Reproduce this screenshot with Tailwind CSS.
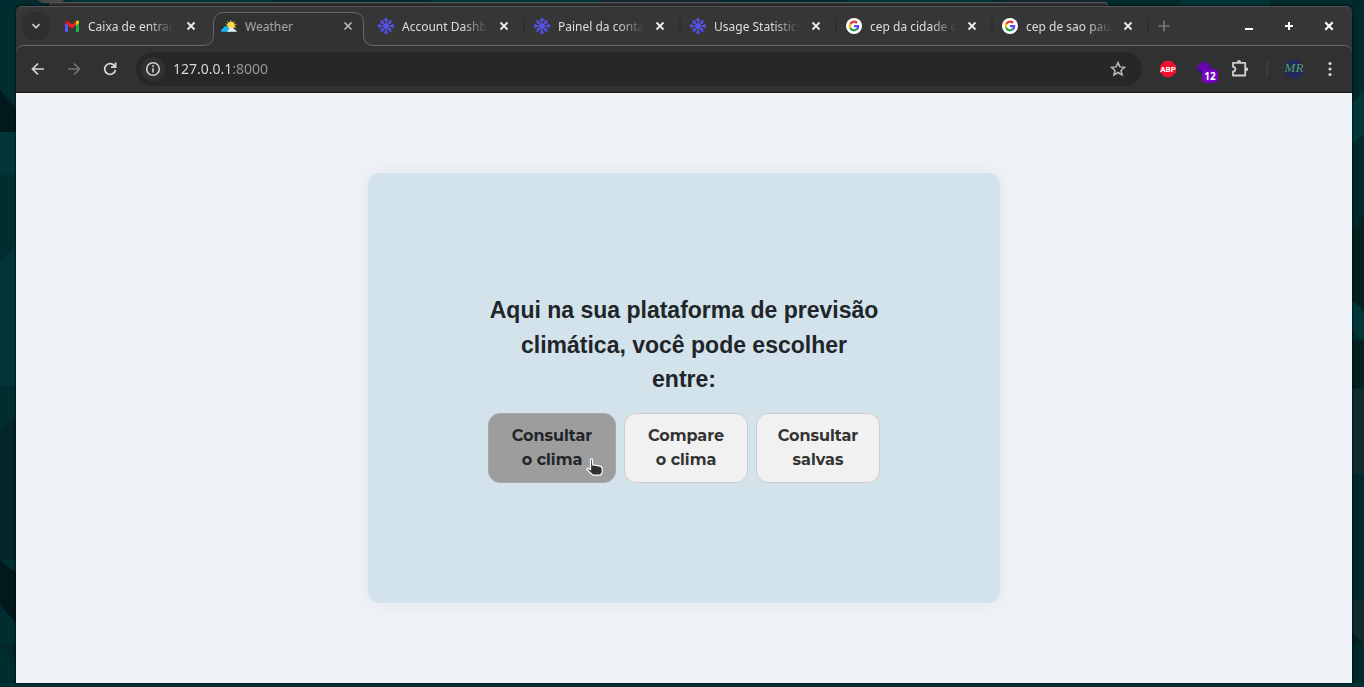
<!DOCTYPE html>
<html lang="pt-BR">
<head>
<meta charset="utf-8">
<meta name="viewport" content="width=device-width, initial-scale=1">
<title>Weather</title>
<script src="https://cdn.jsdelivr.net/npm/@tailwindcss/browser@4"></script>
</head>
<body class="relative isolate h-screen overflow-hidden bg-[#022b2d] font-['Noto_Sans','Open_Sans',sans-serif]">

<!-- Desktop wallpaper -->
<svg class="absolute inset-0 -z-10 h-full w-full" viewBox="0 0 1364 687" preserveAspectRatio="none" aria-hidden="true">
  <path fill="#002e30" d="M0 0h16v687H0z"/>
  <path fill="#02191b" d="M0 90l16 18v24H0zM0 560l16 13v50l-16-18z"/>
  <path fill="#003638" d="M0 132h16v43H0zM0 262l16-16v140H0z"/>
  <path fill="#042628" d="M0 430l16-15v15h-14l14 2v128H0zM0 644l16 16v-15z"/>
  <path fill="#003436" d="M70 0h200v7H70zM430 0h180v7H430zM850 0h140v7H850zM1180 0h90v7h-90z"/>
  <path fill="#10282c" d="M600 0h120v7H600zM1000 0h110l-8 7h-100z"/>
  <path fill="#00292b" d="M1352 0h12v687h-12z"/>
  <path fill="#00383a" d="M1352 103l12-12v43l-12 10zM1352 300l12 12v30l-12-12z"/>
  <path fill="#04201f" d="M1352 230l12-14v94l-12-10zM1352 340h12v48h-12zM1352 632l12 12h-12z"/>
  <path fill="#112b2f" d="M1352 389h12v85h-12zM1352 600h12v44l-12-12z"/>
  <path fill="#003033" d="M0 683h1364v4H0z"/>
  <path fill="#484848" d="M38 0h26l-3 3H42z"/>
  <path fill="#353535" stroke="#565656" d="M50 8V4q0-1.500 2-1.500h1053q3 0 3 3V8"/>
</svg>

<div class="flex h-full flex-col pt-1.5 pr-3 pb-1 pl-4">
<div class="flex min-h-0 flex-1 flex-col rounded-t-md border-t border-[#565656] bg-[#363636] shadow-[0_0_3px_#000]">

  <!-- Tab strip -->
  <header class="flex h-[38px] shrink-0 items-center pl-1.5 text-xs leading-5 text-[#dedede]">
    <button aria-label="Pesquisar guias" class="grid size-7 place-items-center rounded-[10px] bg-[#2f2f2f]">
      <svg class="size-3" viewBox="0 0 12 12" fill="none" stroke="#c9c9c9" stroke-width="1.700"><path d="M2.500 4.200L6 7.700l3.500-3.500"/></svg>
    </button>

    <nav class="ml-1.5 flex items-center" aria-label="Guias">
      <div class="flex h-7 w-[157px] items-center pl-2">
        <svg class="size-4 shrink-0" viewBox="0 0 16 16"><path fill="#5a55f5" d="M1 4.500l3 2.300V14H2q-1 0-1-1z"/><path fill="#1fae55" d="M12 6.800l3-2.300V13q0 1-1 1h-2z"/><path fill="#ee2222" d="M4 3.300l4 3.100 4-3.100v4L8 10.500 4 7.300z"/><path fill="#c5161c" d="M1 4.200C1 2.300 2.700 2 4 3.200v4.100L1 5z"/><path fill="#ffc800" d="M15 4.200c0-1.900-1.700-2.200-3-1v4.100L15 5z"/></svg>
        <a href="#" class="ml-2 w-[86px] overflow-hidden pt-px whitespace-nowrap mask-r-from-70%">Caixa de entrada</a>
        <button aria-label="Fechar guia" class="ml-2.5 grid size-3.5 place-items-center"><svg class="size-2.5" viewBox="0 0 10 10" stroke="#eeeeee" stroke-width="1.800"><path d="M1.500 1.500l7 7m0-7l-7 7"/></svg></button>
      </div>

      <div class="relative flex h-7 w-[157px] items-center pl-2 text-[#a6a6a6]">
        <svg class="absolute top-0 -left-2.5 h-[35px] w-[171px] max-w-none" viewBox="0 0 171 35" fill="none"><path fill="#313131" d="M0 35v-2q10 0 10-10V10Q10 0 20 0h130q10 0 10 10v13q0 10 11 10v2z"/><path stroke="#686868" d="M0 33.500Q10.500 33.500 10.500 23V11Q10.500 .5 21 .5h129Q160.500 .5 160.500 11v12q0 10.500 10.500 10.500"/></svg>
        <svg class="relative size-4 shrink-0" viewBox="0 0 16 16"><path stroke="#c9b43a" stroke-width="1" d="M9.800 2v2M6.200 3.200l1.300 1.500M13.500 3.200l-1.300 1.500M15.400 6.500l-2 .5M4.500 5.800l1.800.8M15 9.500l-1.500-.6"/><circle cx="10" cy="7.500" r="3.800" fill="#ffd84d"/><path fill="#18b5fb" d="M0 12.800q0-1.800 2-2.200 1-2.600 3-2.600 2.400.2 2.800 2.600Q9 11 9 13.800H.8Q0 13.800 0 12.800z"/><path fill="#e4f3fb" d="M6.500 13.800q0-2 1.700-2.200.5-2 2.300-2 1.700.1 2.200 1.700 1.800 0 2.100 1.200 1 .1 1 1.300z"/></svg>
        <a href="#" aria-current="page" class="relative ml-2 w-[86px] overflow-hidden pt-px whitespace-nowrap">Weather</a>
        <button aria-label="Fechar guia" class="relative ml-2.5 grid size-3.5 place-items-center"><svg class="size-2.5" viewBox="0 0 10 10" stroke="#bdbdbd" stroke-width="1.600"><path d="M1.500 1.500l7 7m0-7l-7 7"/></svg></button>
      </div>

      <div class="flex h-7 w-[156px] items-center pl-2">
        <svg class="size-4 shrink-0" viewBox="0 0 16 16" fill="none" stroke="#5653ee" stroke-width="1.500"><g id="flake"><path d="M8 0v16M0 8h16M2.500 2.500l11 11M13.500 2.500l-11 11"/><path stroke-width="1.100" d="M6 .8l2 2 2-2M6 15.200l2-2 2 2M.8 6l2 2-2 2M15.200 6l-2 2 2 2M5 2.300V5H2.300M11 2.300V5h2.700M5 13.700V11H2.300M11 13.700V11h2.700"/></g></svg>
        <a href="#" class="ml-2 w-[86px] overflow-hidden pt-px whitespace-nowrap mask-r-from-70%">Account Dashboard</a>
        <button aria-label="Fechar guia" class="ml-[9px] grid size-3.5 place-items-center"><svg class="size-2.5" viewBox="0 0 10 10" stroke="#eeeeee" stroke-width="1.800"><path d="M1.500 1.500l7 7m0-7l-7 7"/></svg></button>
        <span class="ml-3 h-4 w-0.5 bg-[#2f2f2f]"></span>
      </div>

      <div class="flex h-7 w-[156px] items-center pl-2">
        <svg class="size-4 shrink-0" viewBox="0 0 16 16" fill="none" stroke="#5653ee" stroke-width="1.500"><use href="#flake"/></svg>
        <a href="#" class="ml-2 w-[86px] overflow-hidden pt-px whitespace-nowrap mask-r-from-70%">Painel da conta</a>
        <button aria-label="Fechar guia" class="ml-[9px] grid size-3.5 place-items-center"><svg class="size-2.5" viewBox="0 0 10 10" stroke="#eeeeee" stroke-width="1.800"><path d="M1.500 1.500l7 7m0-7l-7 7"/></svg></button>
        <span class="ml-3 h-4 w-0.5 bg-[#2f2f2f]"></span>
      </div>

      <div class="flex h-7 w-[156px] items-center pl-2">
        <svg class="size-4 shrink-0" viewBox="0 0 16 16" fill="none" stroke="#5653ee" stroke-width="1.500"><use href="#flake"/></svg>
        <a href="#" class="ml-2 w-[86px] overflow-hidden pt-px whitespace-nowrap mask-r-from-70%">Usage Statistics</a>
        <button aria-label="Fechar guia" class="ml-[9px] grid size-3.5 place-items-center"><svg class="size-2.5" viewBox="0 0 10 10" stroke="#eeeeee" stroke-width="1.800"><path d="M1.500 1.500l7 7m0-7l-7 7"/></svg></button>
        <span class="ml-3 h-4 w-0.5 bg-[#2f2f2f]"></span>
      </div>

      <div class="flex h-7 w-[156px] items-center pl-2">
        <svg class="size-4 shrink-0" viewBox="0 0 16 16" fill="none"><g id="google" stroke-width="2.200"><circle cx="8" cy="8" r="8" fill="#fff"/><path stroke="#e33b2e" d="M4.300 5.800Q5.600 3.700 8 3.700q1.700 0 3.100 1.200"/><path stroke="#fabb05" d="M4.300 5.800q-1 2.200 0 4.400"/><path stroke="#1fa454" d="M4.300 10.200Q5.600 12.300 8 12.300q1.500 0 2.700-.9"/><path stroke="#5850f0" d="M8 8.200h4.200q0 2-1.500 3.200"/></g></svg>
        <a href="#" class="ml-2 w-[86px] overflow-hidden pt-px whitespace-nowrap mask-r-from-70%">cep da cidade de</a>
        <button aria-label="Fechar guia" class="ml-[9px] grid size-3.5 place-items-center"><svg class="size-2.5" viewBox="0 0 10 10" stroke="#eeeeee" stroke-width="1.800"><path d="M1.500 1.500l7 7m0-7l-7 7"/></svg></button>
        <span class="ml-3 h-4 w-0.5 bg-[#2f2f2f]"></span>
      </div>

      <div class="flex h-7 w-[156px] items-center pl-2">
        <svg class="size-4 shrink-0" viewBox="0 0 16 16" fill="none"><use href="#google"/></svg>
        <a href="#" class="ml-2 w-[86px] overflow-hidden pt-px whitespace-nowrap mask-r-from-70%">cep de sao paulo</a>
        <button aria-label="Fechar guia" class="ml-[9px] grid size-3.5 place-items-center"><svg class="size-2.5" viewBox="0 0 10 10" stroke="#eeeeee" stroke-width="1.800"><path d="M1.500 1.500l7 7m0-7l-7 7"/></svg></button>
        <span class="ml-3 h-4 w-0.5 bg-[#2f2f2f]"></span>
      </div>
    </nav>

    <button aria-label="Nova guia" class="ml-1.5 grid size-4 place-items-center"><svg class="size-3" viewBox="0 0 12 12" stroke="#777777" stroke-width="1.700"><path d="M6 .5v11M.5 6h11"/></svg></button>

    <div class="mr-[13px] ml-auto flex gap-5">
      <button aria-label="Minimizar" class="grid size-5 place-items-center"><svg class="size-2.5" viewBox="0 0 10 10" stroke="#fff" stroke-width="2"><path d="M1 8h8"/></svg></button>
      <button aria-label="Maximizar" class="grid size-5 place-items-center"><svg class="size-2.5" viewBox="0 0 10 10" stroke="#fff" stroke-width="2"><path d="M1 5h8M5 1v8"/></svg></button>
      <button aria-label="Fechar" class="grid size-5 place-items-center"><svg class="size-2.5" viewBox="0 0 10 10" stroke="#fff" stroke-width="2.200"><path d="M1.300 1.300l7.400 7.400m0-7.400L1.300 8.700"/></svg></button>
    </div>
  </header>

  <!-- Toolbar -->
  <div class="flex h-12 shrink-0 items-center rounded-t-lg border-t border-b border-t-[#686868] border-b-[#151515] bg-[#313131] pr-3.5 pl-3">
    <div class="flex gap-4">
      <button aria-label="Voltar" class="grid size-5 place-items-center"><svg class="w-4" viewBox="0 0 16 16" fill="none" stroke="#d6d6d6" stroke-width="1.700"><path d="M14 8H3M8 2.500L2.500 8 8 13.500"/></svg></button>
      <button aria-label="Avançar" class="grid size-5 place-items-center"><svg class="w-4" viewBox="0 0 16 16" fill="none" stroke="#747474" stroke-width="1.700"><path d="M2 8h11M8 2.500L13.500 8 8 13.500"/></svg></button>
      <button aria-label="Recarregar" class="grid size-5 place-items-center"><svg class="w-4" viewBox="0 0 16 16" fill="none" stroke="#d6d6d6" stroke-width="1.800"><path d="M13 5.800A5.400 5.400 0 1 0 13.400 8.800M13.600 1.500v4.700H9"/></svg></button>
    </div>
    <div class="ml-4 flex h-[34px] min-w-0 flex-1 items-center rounded-full bg-[#272727] pr-4 pl-[5px]">
      <button aria-label="Informações do site" class="grid size-6 shrink-0 place-items-center rounded-full bg-[#313131]"><svg class="size-4" viewBox="0 0 16 16" fill="none" stroke="#cfcfcf" stroke-width="1.600"><circle cx="8" cy="8" r="6.300"/><path d="M8 7.200v4.200M8 4.300v1.600"/></svg></button>
      <label for="url" class="sr-only">Endereço</label>
      <input id="url" value="127.0.0.1:8000" class="ml-2 h-5 min-w-0 flex-1 bg-[linear-gradient(to_right,#dddddd_60px,#9a9a9a_60px)] bg-clip-text text-sm leading-5 text-transparent outline-none">
      <button aria-label="Adicionar aos favoritos"><svg class="size-4" viewBox="0 0 16 16" fill="none" stroke="#b9b9b9" stroke-width="1.500"><path d="M8 1.600l1.900 4.300 4.700.4-3.600 3.100 1.100 4.600L8 11.500 3.900 14 5 9.400 1.400 6.300l4.700-.4z"/></svg></button>
    </div>

    <div class="ml-[18px] flex items-center">
      <button aria-label="ABP" class="grid size-4 place-items-center"><svg class="size-4" viewBox="0 0 16 16"><path fill="#f2102f" d="M4.700 0h6.600L16 4.700v6.600L11.300 16H4.700L0 11.300V4.700z"/><text x="8" y="11" text-anchor="middle" font-family="Roboto, sans-serif" font-size="8" font-weight="700" fill="#fff">ABP</text></svg></button>
      <button aria-label="Extensão" class="relative ml-5 size-4">
        <svg class="size-4" viewBox="0 0 16 16"><path fill="#38108c" d="M0 8l4-2 6 7H7z"/><path fill="#6505ae" d="M0 6l8-6 8 6-7 5z"/></svg>
        <span class="absolute top-2 left-1.5 grid h-3.5 w-4 place-items-center rounded-[4px] bg-[#7603c0] text-[10px] leading-3 font-bold text-white">12</span>
      </button>
      <button aria-label="Extensões" class="ml-5 grid size-4 place-items-center"><svg class="size-4" viewBox="1 1 16 16" overflow="visible" fill="none" stroke="#d0d0d0" stroke-width="1.800"><path stroke-linejoin="round" d="M2 2.800h12.200V15.500H2v-4q2.400-.2 2.400-2.300T2 6.800z"/><path fill="#d0d0d0" stroke="none" d="M6 2.300q0-2.300 2-2.300t2 2.300zM15 7.200q2.200 0 2.200 2T15 11.200z"/></svg></button>
      <span class="ml-[18px] h-4 w-0.5 bg-[#3c3c3c]"></span>
      <button aria-label="Perfil" class="ml-4 grid size-5 place-items-center"><svg class="size-5" viewBox="0 0 20 20" overflow="visible"><circle cx="10" cy="10" r="9.500" fill="#20285d"/><text x="10" y="13" text-anchor="middle" font-family="Liberation Serif, serif" font-style="italic" font-size="13" fill="#58a052">MR</text></svg></button>
      <button aria-label="Menu" class="ml-[18px] grid size-4 place-items-center"><svg class="size-4" viewBox="0 0 16 16" fill="#d6d6d6"><circle cx="8" cy="2.500" r="1.600"/><circle cx="8" cy="8" r="1.600"/><circle cx="8" cy="13.500" r="1.600"/></svg></button>
    </div>
  </div>

  <!-- Page -->
  <main class="grid min-h-0 flex-1 place-items-center bg-[#eff3f8]">
    <section class="w-full max-w-[632px] rounded-xl bg-[#d2e3eb] px-[120px] py-[120px] shadow-[0_0_20px_rgba(0,0,0,0.06)]">
      <h1 class="text-center font-['Liberation_Sans',Arial,sans-serif] text-[23px] leading-[1.5] font-bold text-[#212529]">Aqui na sua plataforma de previsão climática, você pode escolher entre:</h1>
      <div class="mt-4 flex gap-2 font-['Montserrat','Inter',sans-serif] text-base leading-6 font-bold text-[#333333]">
        <button class="relative w-32 rounded-xl border border-[#a8a8a8] bg-[#9d9d9d] px-5 py-2.5 text-[#212529]">Consultar<br>o clima
          <svg class="absolute right-3 bottom-1.5 h-[18px] w-[17px]" viewBox="0 0 17 18" aria-hidden="true"><path fill="#2f2f2f" stroke="#fff" stroke-width="1.200" stroke-linejoin="round" d="M4.500 1.800Q4.500.8 5.500.8t1 1V7h1.600l1.700.4 1.900.3 2 .4q2.500.4 2.500 2.700v3.400l-1.600 2.900H7L1 11.800Q.5 10.700 1.600 10.300l2.900 1.400z"/></svg>
        </button>
        <button class="min-w-0 flex-1 rounded-xl border border-[#cccccc] bg-[#f1f1f1] py-2.5">Compare<br>o clima</button>
        <button class="min-w-0 flex-1 rounded-xl border border-[#cccccc] bg-[#f1f1f1] py-2.5">Consultar<br>salvas</button>
      </div>
    </section>
  </main>
</div>
</div>
</body>
</html>
